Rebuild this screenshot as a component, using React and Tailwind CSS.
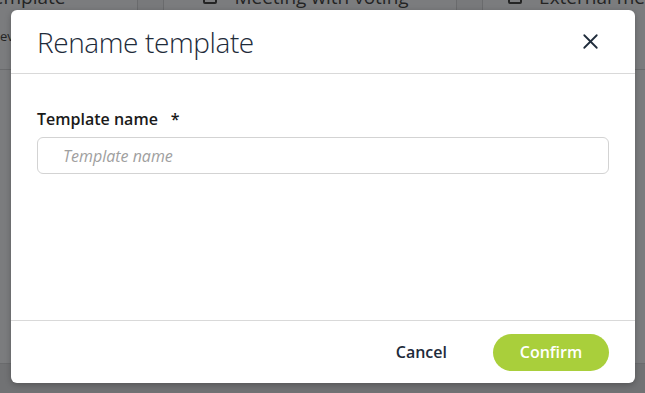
import { X } from 'lucide-react'

export default function App() {
  return (
    <div className="relative w-[645px] h-[393px] overflow-hidden bg-[#7b7c7e] font-['Open_Sans',sans-serif]">
      {/* Dimmed page behind the modal */}
      <div className="flex h-[70px] border-b border-[#6a6b6d] text-[#242424]">
        <div className="w-[142px] border-r border-[#6a6b6d]">
          <div className="-ml-[14px] -mt-[12px] whitespace-nowrap text-[19px] leading-none">template</div>
          <div className="mt-[23px] text-[13px] leading-none">ev</div>
        </div>
        <div className="w-[27px] border-r border-[#6a6b6d] bg-[#78797b]"></div>
        <div className="flex w-[301px] items-start justify-center border-r border-[#6a6b6d] pr-[8px]">
          <div className="-mt-[12px] flex items-center gap-[17px] whitespace-nowrap text-[19px] leading-none">
            <span className="inline-block h-[13px] w-[14px] rounded-[2px] border-2 border-[#242424]"></span>
            Meeting with voting
          </div>
        </div>
        <div className="w-[27px] border-r border-[#6a6b6d] bg-[#78797b]"></div>
        <div className="flex-1 pl-[25px]">
          <div className="-mt-[12px] flex items-center gap-[17px] whitespace-nowrap text-[19px] leading-none">
            <span className="inline-block h-[13px] w-[14px] rounded-[2px] border-2 border-[#242424]"></span>
            External me
          </div>
          <div className="mt-[23px] pl-[114px] text-[13px] leading-none">er</div>
        </div>
      </div>
      <div className="mt-[293px] h-[30px] border-t border-[#6a6b6d] bg-[#717274]"></div>

      {/* Modal */}
      <div className="absolute left-[11px] top-[10px] flex h-[373px] w-[624px] flex-col rounded-[6px] bg-white shadow-[0_2px_6px_rgba(0,0,0,0.25)]">
        <div className="flex h-[64px] shrink-0 items-center justify-between border-b border-[#d9d9d9] pl-[26px] pr-[32px]">
          <h1 className="text-[28px] font-light tracking-[-0.4px] text-[#1e2b3a]">Rename template</h1>
          <X className="h-[25px] w-[25px] text-[#1e2b3a]" strokeWidth={1.7} />
        </div>
        <div className="flex-1 px-[26px] pt-[33px]">
          <label className="flex items-center text-[16px] font-semibold text-[#1a1a1a]">
            Template name
            <span className="ml-[13px]">*</span>
          </label>
          <div className="mt-[6px] flex h-[37px] items-center rounded-[6px] border border-[#d3d3d3] pl-[25px] text-[16px] italic text-[#a0a0a0]">
            Template name
          </div>
        </div>
        <div className="flex h-[63px] shrink-0 items-center justify-end gap-[46px] border-t border-[#d9d9d9] pr-[26px]">
          <button className="text-[16px] font-semibold text-[#1e2b3a]">Cancel</button>
          <button className="h-[37px] w-[116px] rounded-full bg-[#a9cf3b] text-[16px] font-semibold text-white">
            Confirm
          </button>
        </div>
      </div>
    </div>
  )
}
